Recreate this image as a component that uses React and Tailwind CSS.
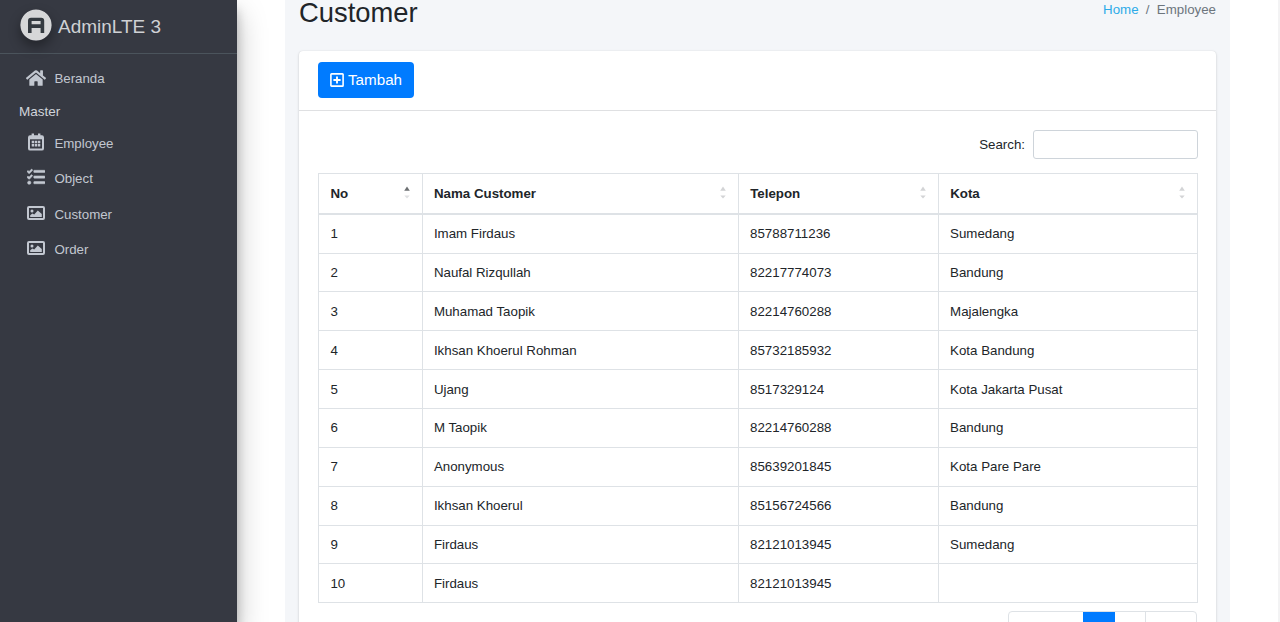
import React from "react";
import { FaHome, FaTasks } from "react-icons/fa";

const rows = [
  ["1", "Imam Firdaus", "85788711236", "Sumedang"],
  ["2", "Naufal Rizqullah", "82217774073", "Bandung"],
  ["3", "Muhamad Taopik", "82214760288", "Majalengka"],
  ["4", "Ikhsan Khoerul Rohman", "85732185932", "Kota Bandung"],
  ["5", "Ujang", "8517329124", "Kota Jakarta Pusat"],
  ["6", "M Taopik", "82214760288", "Bandung"],
  ["7", "Anonymous", "85639201845", "Kota Pare Pare"],
  ["8", "Ikhsan Khoerul", "85156724566", "Bandung"],
  ["9", "Firdaus", "82121013945", "Sumedang"],
  ["10", "Firdaus", "82121013945", ""],
];

const columns = ["No", "Nama Customer", "Telepon", "Kota"];

function Logo() {
  return (
    <svg viewBox="0 0 32 32" className="size-8 rounded-full shadow-[0_6px_12px_rgba(0,0,0,0.35)]">
      <circle cx="16" cy="16" r="15.6" fill="#d6d7d8" />
      <path
        fillRule="evenodd"
        fill="#343a40"
        d="M8 24V11.8Q8 8.8 11 8.8H21.2Q24.2 8.8 24.2 11.8V24H20.6V19H11.6V24ZM11.6 12V15.2H20.6V12Z"
      />
    </svg>
  );
}

function CalendarIcon({ className }) {
  return (
    <svg viewBox="0 0 16 18" className={className} fill="none" stroke="currentColor">
      <rect x="1" y="3.2" width="14" height="13.4" rx="1.2" strokeWidth="2" />
      <path d="M1 4.6H15" strokeWidth="3.4" />
      <path d="M4.8 0.4V4M11.2 0.4V4" strokeWidth="2.4" />
      <path d="M3.7 9.1H6.1M6.8 9.1H9.2M9.9 9.1H12.3M3.7 12.3H6.1M6.8 12.3H9.2M9.9 12.3H12.3" strokeWidth="2.5" />
    </svg>
  );
}

function ImageIcon({ className }) {
  return (
    <svg viewBox="0 0 18 14" className={className}>
      <rect x="1" y="1" width="16" height="12" rx="1" fill="none" stroke="currentColor" strokeWidth="2" />
      <circle cx="5" cy="5" r="1.5" fill="currentColor" />
      <path d="M3.2 11V9.2L5.4 7.4L7.2 8.4L10.8 4.4L14.8 8V11Z" fill="currentColor" />
    </svg>
  );
}

function PlusSquareIcon({ className }) {
  return (
    <svg viewBox="0 0 14 14" className={className} fill="none" stroke="currentColor" strokeWidth="1.6">
      <rect x="0.9" y="0.9" width="12.2" height="12.2" rx="0.7" />
      <path d="M7 3.4V10.6M3.4 7H10.6" strokeWidth="1.9" />
    </svg>
  );
}

function NavItem({ icon: Icon, label, iconClass }) {
  return (
    <li className="flex h-[35.3px] items-center pl-[24px]">
      <span className="flex w-6 justify-center">
        <Icon className={iconClass} />
      </span>
      <span className="ml-[6.4px] leading-5">{label}</span>
    </li>
  );
}

function SortIcon({ active }) {
  return (
    <svg viewBox="0 0 6 14" className="mb-[1px] h-[14px] w-[6px]">
      <path d="M3 0.6L5.8 4.8H0.2Z" fill={active ? "#6c6f72" : "#d3d4d6"} />
      <path d="M3 12.6L5.7 9.6H0.3Z" fill={active ? "#dfe0e2" : "#d3d4d6"} />
    </svg>
  );
}

export default function App() {
  return (
    <div className="flex h-[622px] w-[1280px] overflow-hidden bg-white font-['Liberation_Sans',Arial,sans-serif] text-[13.3px] text-[#212529]">
      <aside className="z-10 w-[237px] shrink-0 bg-[#363942] text-[#c2c7d0] shadow-[0_14px_28px_rgba(0,0,0,0.25),0_10px_10px_rgba(0,0,0,0.22)]">
        <div className="flex h-[54px] items-center border-b border-[#4b545c] pb-[3px] pl-[19.6px] text-[19px] text-[#cfd1d4]">
          <Logo />
          <span className="ml-[6.4px] pt-[4px]">AdminLTE 3</span>
        </div>
        <ul className="pt-[7px]">
          <NavItem icon={FaHome} label="Beranda" iconClass="size-[20px] shrink-0 -translate-y-px" />
          <li className="flex h-[30px] items-center pl-[19px] pt-[1px] text-[13.5px] text-[#d0d4db]">Master</li>
          <NavItem icon={CalendarIcon} label="Employee" iconClass="h-[18px] w-[16px] -translate-y-[2px]" />
          <NavItem icon={FaTasks} label="Object" iconClass="size-[18px] -translate-y-[2px] stroke-current stroke-[14px]" />
          <NavItem icon={ImageIcon} label="Customer" iconClass="h-[14px] w-[18px] -translate-y-[2px]" />
          <NavItem icon={ImageIcon} label="Order" iconClass="h-[14px] w-[18px] -translate-y-[2px]" />
        </ul>
      </aside>

      <main className="ml-[48px] w-[945px] shrink-0 bg-[#f4f6f9] px-[14px]">
        <header className="flex h-[51px] items-start justify-between">
          <h1 className="text-[27.36px] leading-[26px]">Customer</h1>
          <nav className="flex pt-[1px] leading-[18px] text-[#6c757d]">
            <a className="text-[#2cabe8]">Home</a>
            <span className="px-[7.3px]">/</span>
            <span>Employee</span>
          </nav>
        </header>

        <section className="h-[640px] rounded-[4px] bg-white shadow-[0_0_1px_rgba(0,0,0,0.125),0_1px_3px_rgba(0,0,0,0.15)]">
          <div className="h-[60px] border-b border-[#dfe0e2] pl-[19px] pt-[11.4px]">
            <button className="flex h-[36px] w-[96px] items-center rounded-[4px] bg-[#007bff] pl-[12px] text-[15.2px] text-white">
              <PlusSquareIcon className="size-[14px]" />
              <span className="ml-[4px]">Tambah</span>
            </button>
          </div>

          <div className="px-[19px] pt-[19px]">
            <label className="-mr-[1px] flex items-center justify-end">
              <span>Search:</span>
              <input className="ml-[8px] h-[29px] w-[165px] rounded-[3px] border border-[#ced4da] bg-white px-2 outline-none" />
            </label>

            <div className="mt-[14px] w-[880px] border-l border-t border-[#dee2e6]">
              <div className="grid h-[40.8px] grid-cols-[103.5px_316.2px_200px_259.3px] border-b-2 border-[#dee2e6] font-bold">
                {columns.map((title, i) => (
                  <div key={title} className="flex items-center justify-between border-r border-[#dee2e6] pl-[11.5px] pr-[12px] pt-[0.4px]">
                    <span>{title}</span>
                    <SortIcon active={i === 0} />
                  </div>
                ))}
              </div>
              {rows.map((row) => (
                <div key={row[0]} className="grid h-[38.85px] grid-cols-[103.5px_316.2px_200px_259.3px] border-b border-[#dee2e6]">
                  {row.map((cell, i) => (
                    <div key={i} className="flex items-center border-r border-[#dee2e6] pl-[11.4px] pt-[1px]">
                      {cell}
                    </div>
                  ))}
                </div>
              ))}
            </div>

            <div className="mt-[7.4px] flex justify-end">
              <div className="flex h-[34px] w-[189px] overflow-hidden rounded-[4px] border border-[#dee2e6]">
                <span className="w-[74px]" />
                <span className="-mt-px h-[35px] w-[32px] bg-[#007bff]" />
                <span className="w-[31px] border-r border-[#dee2e6]" />
              </div>
            </div>
          </div>
        </section>
      </main>

      <div className="ml-auto w-[2px] bg-[#f3f3f4]" />
    </div>
  );
}
